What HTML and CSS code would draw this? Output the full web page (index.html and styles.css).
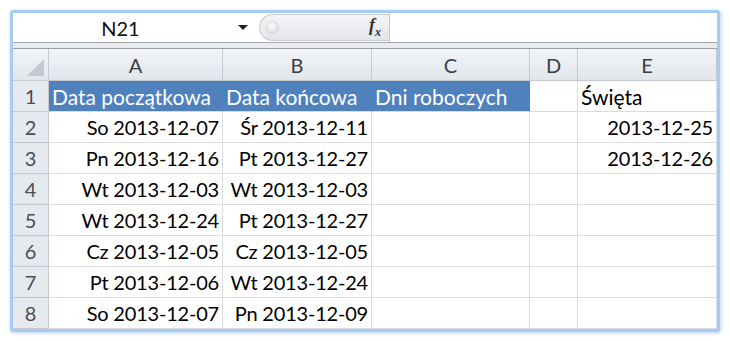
FILE: index.html
```html
<!DOCTYPE html>
<html>
<head>
    <title>Dni robocze</title>
    <link rel="stylesheet" href="styles.css">
</head>
<body>
    <div class="window">
        <div class="formula-bar">
            <div class="name-box">N21</div>
            <div class="name-arrow"></div>
            <div class="fx-pill">
                <span class="fx-knob"></span>
                <span class="fx">f<sub>x</sub></span>
            </div>
            <div class="formula-input"></div>
        </div>
        <div class="bar-gap"></div>
        <div class="sheet">
            <div class="hdr corner"><span class="corner-tri"></span></div>
            <div class="hdr col">A</div>
            <div class="hdr col">B</div>
            <div class="hdr col">C</div>
            <div class="hdr col">D</div>
            <div class="hdr col">E</div>

            <div class="hdr row">1</div>
            <div class="cell head">Data początkowa</div>
            <div class="cell head">Data końcowa</div>
            <div class="cell head">Dni roboczych</div>
            <div class="cell"></div>
            <div class="cell">Święta</div>

            <div class="hdr row">2</div>
            <div class="cell num">So 2013-12-07</div>
            <div class="cell num">Śr 2013-12-11</div>
            <div class="cell"></div>
            <div class="cell"></div>
            <div class="cell num">2013-12-25</div>

            <div class="hdr row">3</div>
            <div class="cell num">Pn 2013-12-16</div>
            <div class="cell num">Pt 2013-12-27</div>
            <div class="cell"></div>
            <div class="cell"></div>
            <div class="cell num">2013-12-26</div>

            <div class="hdr row">4</div>
            <div class="cell num">Wt 2013-12-03</div>
            <div class="cell num">Wt 2013-12-03</div>
            <div class="cell"></div>
            <div class="cell"></div>
            <div class="cell"></div>

            <div class="hdr row">5</div>
            <div class="cell num">Wt 2013-12-24</div>
            <div class="cell num">Pt 2013-12-27</div>
            <div class="cell"></div>
            <div class="cell"></div>
            <div class="cell"></div>

            <div class="hdr row">6</div>
            <div class="cell num">Cz 2013-12-05</div>
            <div class="cell num">Cz 2013-12-05</div>
            <div class="cell"></div>
            <div class="cell"></div>
            <div class="cell"></div>

            <div class="hdr row">7</div>
            <div class="cell num">Pt 2013-12-06</div>
            <div class="cell num">Wt 2013-12-24</div>
            <div class="cell"></div>
            <div class="cell"></div>
            <div class="cell"></div>

            <div class="hdr row">8</div>
            <div class="cell num">So 2013-12-07</div>
            <div class="cell num">Pn 2013-12-09</div>
            <div class="cell"></div>
            <div class="cell"></div>
            <div class="cell"></div>
        </div>
    </div>
</body>
</html>
```

FILE: styles.css
```css
body {
    margin: 0;
    padding: 10px;
    background: #fff;
    font-family: Lato, "Open Sans", sans-serif;
}
.window {
    width: 704px;
    border: 3px solid #a8cbf2;
    border-radius: 3px;
    box-shadow: 1px 1px 4px #b7d2f3;
    background: #fff;
}
.formula-bar {
    display: flex;
    align-items: center;
    height: 29px;
    border-bottom: 1px solid #a3a6aa;
    background: #fff;
}
.name-box {
    width: 215px;
    text-align: center;
    font-size: 20px;
    color: #111;
}
.name-arrow {
    width: 0;
    height: 0;
    border-left: 5px solid transparent;
    border-right: 5px solid transparent;
    border-top: 5px solid #222;
    margin-left: 10px;
}
.fx-pill {
    display: flex;
    align-items: center;
    justify-content: space-between;
    margin-left: 11px;
    width: 130px;
    height: 27px;
    padding: 0 8px 0 6px;
    box-sizing: border-box;
    border: 1px solid #c9ccd1;
    border-right: none;
    border-radius: 14px 0 0 14px;
    background: linear-gradient(#f3f4f6, #e3e5e9);
}
.fx-knob {
    width: 11px;
    height: 11px;
    border-radius: 50%;
    background: radial-gradient(circle at 40% 35%, #ffffff, #cfd2d6);
    border: 1px solid #d8dadd;
}
.fx {
    font-family: "Liberation Serif", serif;
    font-style: italic;
    font-weight: bold;
    font-size: 18px;
    color: #333;
}
.fx sub {
    font-size: 12px;
}
.formula-input {
    flex: 1;
    height: 29px;
    border-left: 1px solid #c4c7cb;
    background: #fff;
}
.bar-gap {
    height: 5px;
    background: #e9ebee;
    border-bottom: 1px solid #9a9ea3;
}
.sheet {
    display: grid;
    grid-template-columns: 36px 174px 149px 158px 48px 139px;
    grid-template-rows: 32px repeat(8, 31px);
    font-size: 21px;
}
.hdr {
    background: linear-gradient(#f1f3f6, #e2e6eb);
    color: #3a3f45;
    font-size: 20px;
    display: flex;
    align-items: center;
    justify-content: center;
    box-sizing: border-box;
    border-right: 1px solid #c5cad1;
    border-bottom: 1px solid #c5cad1;
}
.hdr.row {
    background: #e6e9ee;
    color: #4a4f55;
}
.corner {
    position: relative;
}
.corner-tri {
    position: absolute;
    right: 4px;
    bottom: 4px;
    width: 0;
    height: 0;
    border-left: 17px solid transparent;
    border-bottom: 17px solid #c4c8ce;
}
.cell {
    box-sizing: border-box;
    border-right: 1px solid #dadcdf;
    border-bottom: 1px solid #dadcdf;
    padding: 0 3px;
    display: flex;
    align-items: center;
    white-space: nowrap;
    overflow: hidden;
    color: #000;
}
.cell.num {
    justify-content: flex-end;
    font-size: 20px;
    letter-spacing: -0.2px;
}
.cell.head {
    background: #4f81bd;
    color: #fff;
    border-right-color: #4f81bd;
    border-bottom-color: #dadcdf;
}
```
